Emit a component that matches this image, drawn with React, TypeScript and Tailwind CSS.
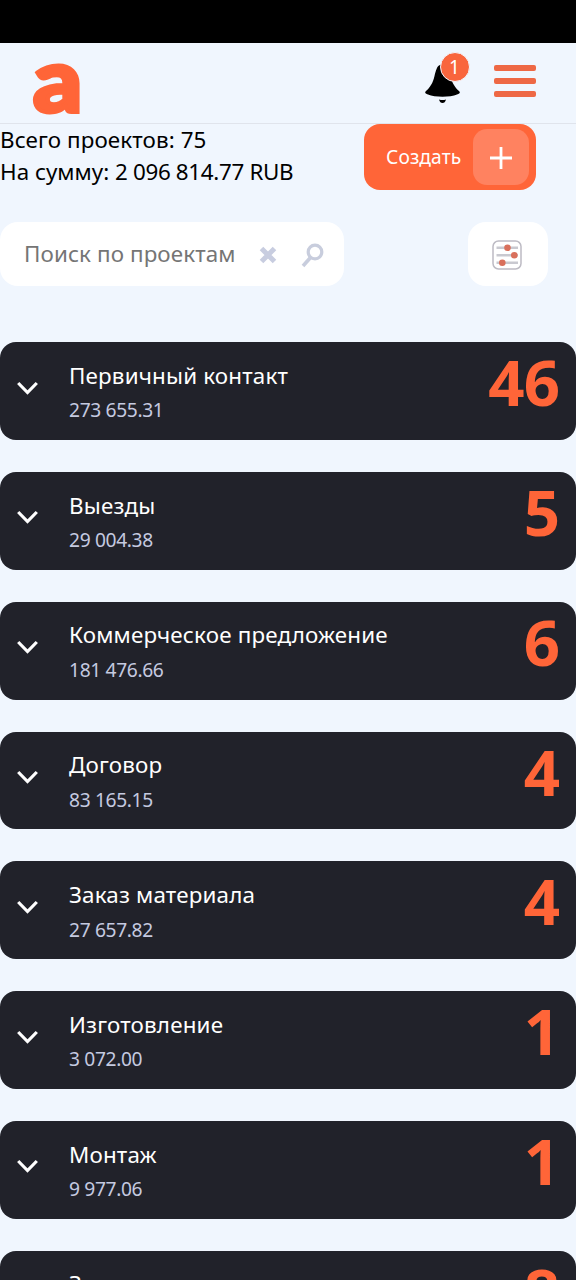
const stages = [
  { title: 'Первичный контакт', sum: '273 655.31', count: 46 },
  { title: 'Выезды', sum: '29 004.38', count: 5 },
  { title: 'Коммерческое предложение', sum: '181 476.66', count: 6 },
  { title: 'Договор', sum: '83 165.15', count: 4 },
  { title: 'Заказ материала', sum: '27 657.82', count: 4 },
  { title: 'Изготовление', sum: '3 072.00', count: 1 },
  { title: 'Монтаж', sum: '9 977.06', count: 1 },
  { title: 'Завершено', sum: '0.00', count: 8 },
]

function Header() {
  return (
    <header className="h-[81px] pl-[33px] pr-10 flex items-center justify-between border-b border-[#e0e4ec]">
      <span className="font-['Lato',sans-serif] font-black text-[90px] leading-[80px] h-20 -mt-3 origin-left scale-x-107 text-[#ff6538] [-webkit-text-stroke:4px_#ff6538]">
        a
      </span>
      <div className="flex items-center -mt-1">
        <button className="relative w-9 h-[42px] mr-[33px] mt-1">
          <svg width="36" height="42" viewBox="0 0 36 42" fill="#000">
            <path d="M15 3C12 4 11 8 9.500 14C8 21 5 25.500 1 29C-.5 30.500 0 31.500 3 32.500C10 35.500 25 35.500 32 32.500C35 31.500 35.500 30.500 34 29C30 25.500 27 21 25.500 14C24 6 20 2 15 3Z" />
            <path d="M14 37.500Q17.500 38.500 21 37.500Q20 41 17.500 41Q15 41 14 37.500Z" />
          </svg>
          <span className="absolute -top-2.5 left-[14.500px] size-[30px] rounded-full bg-[#f9653d] border border-[#f3f6fd] text-white text-[19px] leading-7 text-center">
            1
          </span>
        </button>
        <button className="w-[42px] flex flex-col gap-[7px]">
          <span className="h-1.5 rounded-[2px] bg-[#ee6845]" />
          <span className="h-1.5 rounded-[2px] bg-[#ee6845]" />
          <span className="h-1.5 rounded-[2px] bg-[#ee6845]" />
        </button>
      </div>
    </header>
  )
}

function Search() {
  return (
    <div className="mt-8 pr-7 flex justify-between">
      <div className="w-[344px] h-16 pl-6 pr-5 rounded-[18px] bg-white flex items-center">
        <input
          className="w-[235px] text-[22.4px] tracking-[0.1px] placeholder:text-[#757575] outline-none"
          type="text"
          placeholder="Поиск по проектам"
        />
        <svg className="shrink-0 mt-px" width="18" height="18" viewBox="0 0 18 18" stroke="#c8cde0" strokeWidth="5">
          <path d="M2.500 2.500L15.500 15.500M15.500 2.500L2.500 15.500" />
        </svg>
        <svg className="shrink-0 ml-6 mt-1" width="23" height="26" viewBox="0 0 23 26" fill="none" stroke="#c8cddd">
          <circle cx="14" cy="9" r="6.800" strokeWidth="3.200" />
          <path d="M9.500 14.500L2 23" strokeWidth="3.600" />
        </svg>
      </div>
      <button className="w-20 h-16 rounded-[18px] bg-white flex items-center justify-center">
        <svg className="mt-px -ml-0.5" width="30" height="30" viewBox="0 0 30 30" fill="none">
          <rect x="1" y="1" width="28" height="28" rx="5.500" stroke="#bdbbc4" strokeWidth="1.500" />
          <path d="M4.500 7.800H26M4.500 15.300H26M4.500 22.800H26" stroke="#c9c9d0" strokeWidth="2.400" />
          <circle cx="15.500" cy="7.800" r="3.300" fill="#d9705c" />
          <circle cx="22.300" cy="15.300" r="3.300" fill="#d9705c" />
          <circle cx="10.300" cy="22.800" r="3.300" fill="#d9705c" />
        </svg>
      </button>
    </div>
  )
}

export default function App() {
  return (
    <div className="h-[1280px] overflow-hidden bg-[#f0f6fe] font-['Noto_Sans',sans-serif] text-black">
      <div className="h-[43px] bg-black" />
      <Header />
      <div className="flex justify-between pr-10">
        <div className="text-[22.4px] leading-8 whitespace-nowrap">
          <p className="tracking-[0.1px]">Всего проектов: 75</p>
          <p>
            На сумму: <span className="tracking-[-0.33px]">2 096 814.77 RUB</span>
          </p>
        </div>
        <button className="w-[172px] h-[66px] pl-[22px] pr-[7px] rounded-2xl bg-[#ff6538] text-white text-[19.2px] tracking-[0.1px] flex items-center justify-between">
          Создать
          <span className="size-14 rounded-[14px] bg-[#ff8260] flex items-center justify-center">
            <svg className="mt-px" width="22" height="22" viewBox="0 0 22 22" stroke="#fff" strokeWidth="2.800">
              <path d="M11 0V22M0 11H22" />
            </svg>
          </span>
        </button>
      </div>
      <Search />
      <main className="mt-[56.2px] flex flex-col gap-8">
        {stages.map((stage) => (
          <section
            key={stage.title}
            className="h-[97.8px] shrink-0 pl-[17px] pr-[17px] rounded-2xl bg-[#21222a] flex"
          >
            <svg className="mt-[38.5px]" width="21" height="15" viewBox="0 0 21 15" fill="none" stroke="#fff" strokeWidth="3.200">
              <path d="M1.200 2L10.500 11.500L19.800 2" />
            </svg>
            <div className="ml-[31px] flex-1">
              <h2 className="mt-[17.6px] text-white text-[22.4px] tracking-[0.17px] leading-8">{stage.title}</h2>
              <p className="mt-[6.7px] text-[#c5cae0] text-[19.2px] tracking-[-0.35px] leading-6">{stage.sum}</p>
            </div>
            <strong className="font-bold text-[63.500px] tracking-[-1px] leading-[80px] text-[#ff6538]">{stage.count}</strong>
          </section>
        ))}
      </main>
    </div>
  )
}
